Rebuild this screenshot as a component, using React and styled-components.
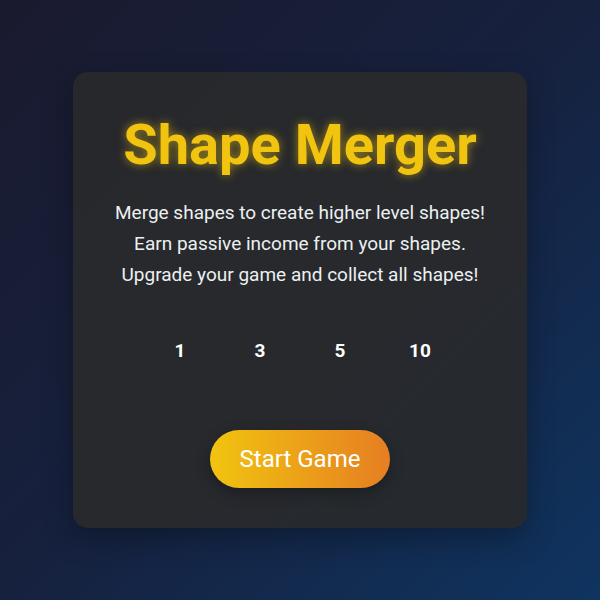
import React from "react";
import styled, { createGlobalStyle } from "styled-components";

const GlobalStyle = createGlobalStyle`
    * {
        box-sizing: border-box;
        margin: 0;
        padding: 0;
    }

    body {
        font-family: Roboto, sans-serif;
        color: #ffffff;
    }
`;

const Page = styled.main`
    min-height: 100vh;
    display: flex;
    justify-content: center;
    align-items: center;
    background: linear-gradient(135deg, #1a1a2e, #16213e, #0f3460);
`;

const Card = styled.section`
    padding: 40px 42px;
    border-radius: 15px;
    text-align: center;
    background-color: rgba(41, 42, 43, 0.9);
    box-shadow: 0 10px 30px rgba(0, 0, 0, 0.3);
`;

const Title = styled.h1`
    margin-bottom: 18px;
    font-size: 56px;
    line-height: 67px;
    color: #f1c40f;
    text-shadow: 0 0 10px rgba(241, 196, 15, 0.6);
`;

const Description = styled.p`
    font-size: 19px;
    line-height: 31px;
    color: #ecf0f1;
`;

const Shapes = styled.ul`
    display: flex;
    justify-content: center;
    gap: 20px;
    margin: 30px 0 50px;
    list-style: none;
`;

const Shape = styled.li`
    display: flex;
    justify-content: center;
    align-items: center;
    width: 60px;
    height: 60px;
    font-size: 19px;
    font-weight: bold;
`;

const StartButton = styled.button`
    padding: 15px 30px;
    border: none;
    border-radius: 50px;
    font-family: inherit;
    font-size: 24px;
    line-height: 28px;
    color: #ffffff;
    background: linear-gradient(to right, #f1c40f, #e67e22);
    box-shadow: 0 5px 15px rgba(0, 0, 0, 0.3);
    cursor: pointer;
`;

const levels = [1, 3, 5, 10];

const App = () => {
    return (
        <>
            <GlobalStyle />
            <Page>
                <Card>
                    <Title>Shape Merger</Title>
                    <Description>
                        Merge shapes to create higher level shapes!
                        <br />
                        Earn passive income from your shapes.
                        <br />
                        Upgrade your game and collect all shapes!
                    </Description>
                    <Shapes>
                        {levels.map((level) => (
                            <Shape key={level}>{level}</Shape>
                        ))}
                    </Shapes>
                    <StartButton type="button">Start Game</StartButton>
                </Card>
            </Page>
        </>
    );
};

export default App;
